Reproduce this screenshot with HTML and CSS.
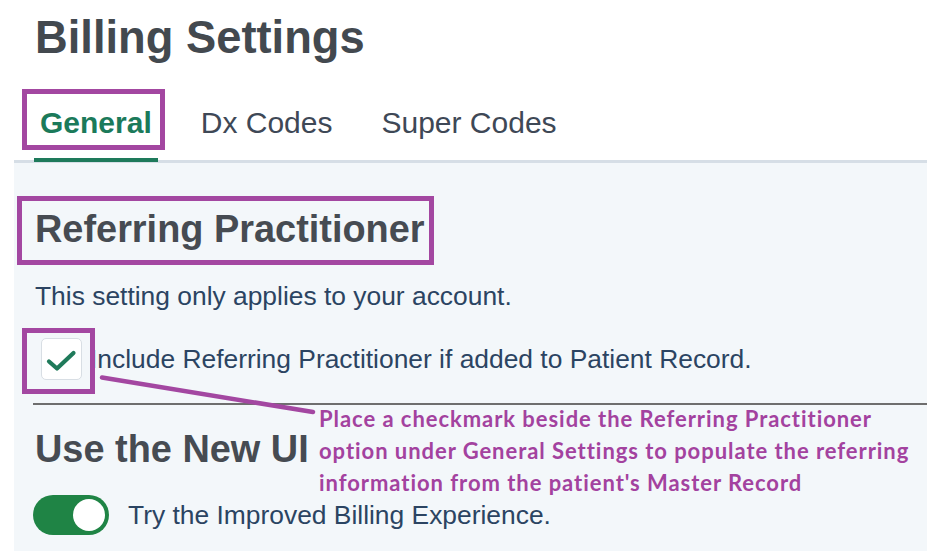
FILE: index.html
```
<!DOCTYPE html>
<html lang="en">
<head>
<meta charset="utf-8">
<title>Billing Settings</title>
<link rel="stylesheet" href="styles.css">
</head>
<body>
<div class="page">
  <header class="header">
    <h1 class="title">Billing Settings</h1>
  </header>
  <div class="main">
    <nav class="tabs">
      <div class="tab active marked">General</div>
      <div class="tab">Dx Codes</div>
      <div class="tab">Super Codes</div>
    </nav>
    <section class="panel">
      <h2 class="section-title boxed">Referring Practitioner</h2>
      <p class="note">This setting only applies to your account.</p>
      <label class="check-row">
        <span class="checkbox marked-check">
          <svg width="41" height="42" viewBox="0 0 41 42" aria-hidden="true">
            <path d="M8 23.5 L16 30.5 L32.5 15" fill="none" stroke="#1f7a5a" stroke-width="4.2" stroke-linecap="round" stroke-linejoin="round"/>
          </svg>
        </span>
        <span class="check-label">Include Referring Practitioner if added to Patient Record.</span>
      </label>
      <div class="divider"></div>
      <h2 class="section-title plain">Use the New UI</h2>
      <div class="toggle-row">
        <span class="toggle"><span class="knob"></span></span>
        <span class="toggle-label">Try the Improved Billing Experience.</span>
      </div>
    </section>
  </div>
  <svg class="pointer" width="927" height="551" viewBox="0 0 927 551" aria-hidden="true">
    <path d="M102 377.5 C 120 380, 200 394, 313 412" fill="none" stroke="#a347a1" stroke-width="4.5" stroke-linecap="round"/>
  </svg>
  <div class="annotation">Place a checkmark beside the Referring Practitioner<br>option under General Settings to populate the referring<br>information from the patient's Master Record</div>
</div>
</body>
</html>
```
FILE: styles.css
```
*, *::before, *::after { box-sizing: border-box; }
html, body { margin: 0; padding: 0; }
body {
  background: #ffffff;
  font-family: "Liberation Sans", Arial, sans-serif;
  width: 927px;
  height: 551px;
  overflow: hidden;
}
.page {
  position: relative;
  width: 927px;
  height: 551px;
}
.header {
  padding: 16px 0 0 35px;
}
.title {
  margin: 0;
  font-size: 45.3px;
  line-height: 44px;
  font-weight: bold;
  color: #43494f;
}
.main {
  margin-left: 14px;
}
.tabs {
  display: flex;
  gap: 37px;
  margin-top: 45px;
  padding-left: 20px;
  border-bottom: 3px solid #d6dee6;
}
.tab {
  position: relative;
  padding: 0 6px 17px;
  font-size: 30px;
  line-height: 36px;
  color: #3e4856;
  border-bottom: 4px solid transparent;
  margin-bottom: -2px;
}
.tab.active {
  color: #1b7a5a;
  font-weight: bold;
  border-bottom-color: #1e7a5b;
}
.marked::after {
  content: "";
  position: absolute;
  left: -12px;
  top: -16px;
  width: 143px;
  height: 61px;
  border: 5px solid #a347a1;
}
.panel {
  background: #f3f7fa;
  height: 388px;
  padding: 33px 0 0 21px;
  color: #2b4462;
}
.section-title {
  margin: 0;
  font-size: 37.9px;
  line-height: 42px;
  font-weight: bold;
  color: #464b52;
}
.boxed {
  display: inline-block;
  margin-left: -18px;
  border: 5px solid #a347a1;
  padding: 7px 4px 10px 13px;
}
.note {
  margin: 16px 0 0;
  font-size: 26.4px;
  line-height: 30px;
}
.check-row {
  display: flex;
  align-items: center;
  gap: 8px;
  margin-top: 27px;
  margin-left: 6px;
  font-size: 26.4px;
  line-height: 30px;
}
.checkbox {
  position: relative;
  flex: none;
  width: 41px;
  height: 42px;
  background: #ffffff;
  border: 1.5px solid #d8dee4;
  border-radius: 5px;
}
.checkbox svg {
  position: absolute;
  left: -1.5px;
  top: -1.5px;
}
.marked-check::after {
  content: "";
  position: absolute;
  left: -20.5px;
  top: -11.5px;
  width: 73px;
  height: 66px;
  border: 5px solid #a347a1;
  z-index: 2;
}
.check-label { position: relative; z-index: 1; }
.divider {
  margin: 23px 0 0 -2px;
  height: 2px;
  background: #6e6e6e;
}
.plain {
  margin-top: 23px;
}
.toggle-row {
  display: flex;
  align-items: center;
  gap: 19px;
  margin-top: 25px;
  margin-left: -2px;
  font-size: 26.4px;
  line-height: 30px;
}
.toggle {
  position: relative;
  flex: none;
  width: 76px;
  height: 40px;
  border-radius: 20px;
  background: #1f8445;
}
.knob {
  position: absolute;
  right: 4px;
  top: 4px;
  width: 32px;
  height: 32px;
  border-radius: 50%;
  background: #ffffff;
}
.pointer {
  position: absolute;
  left: 0;
  top: 0;
  pointer-events: none;
}
.annotation {
  position: absolute;
  left: 319px;
  top: 403px;
  font-family: Lato, "Open Sans", sans-serif;
  font-weight: bold;
  font-size: 22px;
  letter-spacing: 0.95px;
  line-height: 32px;
  color: #a3429f;
  white-space: nowrap;
}
```
